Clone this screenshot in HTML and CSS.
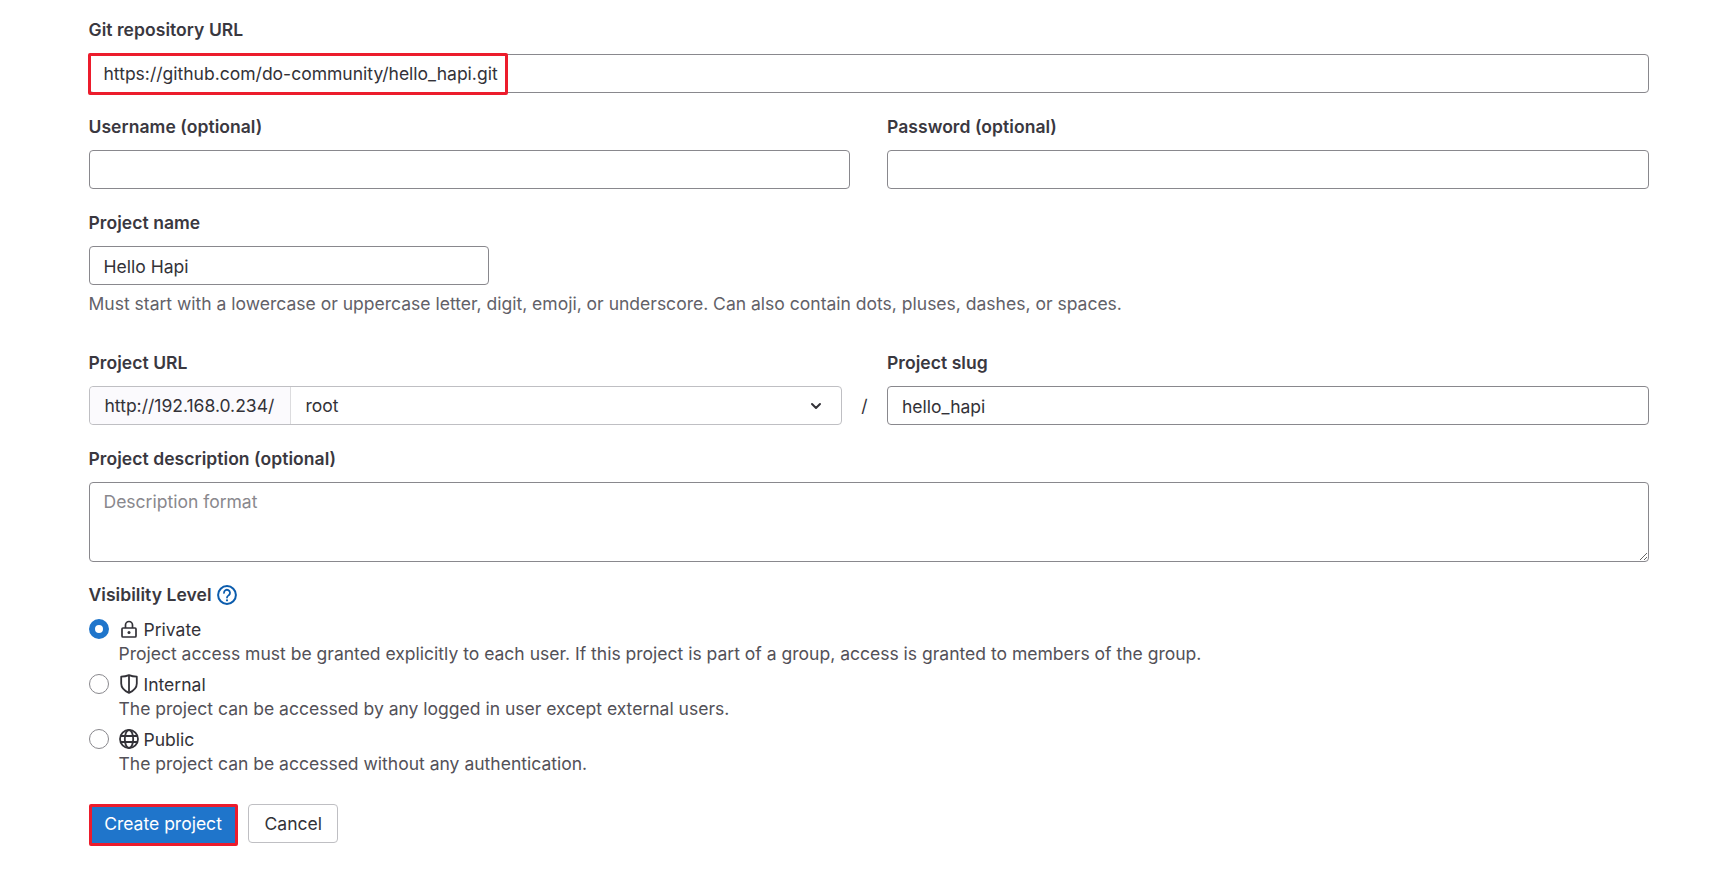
FILE: index.html
```html
<!DOCTYPE html>
<html lang="en">
<head>
<meta charset="utf-8">
<title>Import project</title>
<link rel="stylesheet" href="styles.css">
</head>
<body>
<form class="form">
  <div class="group group-first">
    <label class="label">Git repository URL</label>
    <div class="highlight-wrap">
      <input class="input" type="text" value="https://github.com/do-community/hello_hapi.git">
      <span class="highlight highlight-url"></span>
    </div>
  </div>
  <div class="row">
    <div class="group">
      <label class="label">Username (optional)</label>
      <input class="input" type="text">
    </div>
    <div class="group">
      <label class="label">Password (optional)</label>
      <input class="input" type="password">
    </div>
  </div>
  <div class="group group-name">
    <label class="label">Project name</label>
    <input class="input input-name" type="text" value="Hello Hapi">
    <p class="help">Must start with a lowercase or uppercase letter, digit, emoji, or underscore. Can also contain dots, pluses, dashes, or spaces.</p>
  </div>
  <div class="row row-url">
    <div class="group">
      <label class="label">Project URL</label>
      <div class="url-line">
        <div class="input-group">
          <span class="prefix">http://192.168.0.234/</span>
          <div class="select">
            <span>root</span>
            <svg class="chevron" viewBox="0 0 16 16" width="16" height="16"><path d="M4 6l4 4 4-4" fill="none" stroke="#333238" stroke-width="2" stroke-linecap="round" stroke-linejoin="round"/></svg>
          </div>
        </div>
        <span class="slash">/</span>
      </div>
    </div>
    <div class="group">
      <label class="label">Project slug</label>
      <input class="input input-slug" type="text" value="hello_hapi">
    </div>
  </div>
  <div class="group group-desc">
    <label class="label">Project description (optional)</label>
    <textarea class="textarea" placeholder="Description format"></textarea>
  </div>
  <div class="visibility">
    <div class="vis-title">
      <span class="label-text">Visibility Level</span>
      <svg class="help-icon" viewBox="0 0 20 20" width="20" height="20"><circle cx="10" cy="10" r="8.900" fill="none" stroke="#0b5cad" stroke-width="2"/><path d="M7 7.900a3 3 0 1 1 4.800 2.300c-1.100.8-1.800 1.200-1.800 2.400" fill="none" stroke="#0b5cad" stroke-width="1.800" stroke-linecap="round"/><circle cx="10" cy="15.300" r="1.100" fill="#0b5cad"/></svg>
    </div>
    <div class="option">
      <span class="radio radio-on"></span>
      <div class="option-body">
        <div class="option-title">
          <svg class="vis-icon" viewBox="0 0 20 20" width="20" height="20"><path d="M6.500 9V6a3.500 3.500 0 0 1 7 0v3" fill="none" stroke="#333238" stroke-width="1.700"/><rect x="3" y="9" width="14" height="9" rx="1" fill="none" stroke="#333238" stroke-width="1.700"/><circle cx="10" cy="13.500" r="1.500" fill="#333238"/></svg>
          <span>Private</span>
        </div>
        <div class="option-desc">Project access must be granted explicitly to each user. If this project is part of a group, access is granted to members of the group.</div>
      </div>
    </div>
    <div class="option">
      <span class="radio"></span>
      <div class="option-body">
        <div class="option-title">
          <svg class="vis-icon" viewBox="0 0 20 20" width="20" height="20"><path d="M10 1.200c2.600 1.100 5.200 1.500 7.800 1.500v6.800c0 4.300-3.300 7.400-7.800 9.300-4.500-1.900-7.800-5-7.800-9.300V2.700c2.600 0 5.200-.4 7.800-1.500z" fill="none" stroke="#333238" stroke-width="1.800" stroke-linejoin="round"/><path d="M10 1.500v17" stroke="#333238" stroke-width="1.800"/></svg>
          <span>Internal</span>
        </div>
        <div class="option-desc">The project can be accessed by any logged in user except external users.</div>
      </div>
    </div>
    <div class="option">
      <span class="radio"></span>
      <div class="option-body">
        <div class="option-title">
          <svg class="vis-icon" viewBox="0 0 20 20" width="20" height="20"><circle cx="10" cy="10" r="9" fill="none" stroke="#333238" stroke-width="1.800"/><ellipse cx="10" cy="10" rx="4.200" ry="9" fill="none" stroke="#333238" stroke-width="1.800"/><path d="M1.500 7h17M1.500 13h17" stroke="#333238" stroke-width="1.800"/></svg>
          <span>Public</span>
        </div>
        <div class="option-desc">The project can be accessed without any authentication.</div>
      </div>
    </div>
  </div>
  <div class="actions">
    <button class="btn btn-primary" type="button">Create project</button>
    <button class="btn btn-cancel" type="button">Cancel</button>
  </div>
</form>
</body>
</html>
```
FILE: styles.css
```css
* { box-sizing: border-box; }
html, body { margin: 0; padding: 0; background: #fff; }
body {
  width: 1720px;
  height: 880px;
  overflow: hidden;
  font-family: Inter, "Noto Sans", sans-serif;
  font-size: 17.53px;
  color: #333238;
}
.form { padding: 18px 71px 0 88.5px; }
.group { margin-bottom: 22px; min-width: 0; }
.label, .label-text {
  display: block;
  font-weight: 600;
  line-height: 24px;
  margin-bottom: 11px;
  color: #3a383f;
  letter-spacing: 0.05px;
}
.group-first .label { margin-bottom: 12px; }
.label-text { margin-bottom: 0; }
.input, .textarea {
  display: block;
  width: 100%;
  height: 39px;
  padding: 0 14px;
  border: 1px solid #89888d;
  border-radius: 4px;
  background: #fff;
  font: inherit;
  color: #333238;
  outline: none;
}
.input-name { width: 400px; padding-top: 1px; }
.input-slug { padding-top: 1px; }
.highlight-wrap { position: relative; }
.highlight {
  position: absolute;
  border: 3px solid #ec1c2c;
  pointer-events: none;
}
.highlight-url { left: -1px; top: -1px; width: 420px; height: 42px; border-radius: 2px; }
.row {
  display: grid;
  grid-template-columns: 761.5px 761.5px;
  column-gap: 37px;
}
.row-url { grid-template-columns: 798.5px 761.5px; column-gap: 0; }
.group-name { margin-bottom: 35px; }
.help {
  margin: 7px 0 0;
  line-height: 24px;
  color: #626168;
}
.url-line { display: flex; align-items: center; height: 39px; }
.input-group {
  display: flex;
  width: 753.5px;
  height: 39px;
  border: 1px solid #bfbfc3;
  border-radius: 4px;
}
.prefix {
  display: flex;
  align-items: center;
  width: 201px;
  padding-left: 15px;
  background: #fbfafd;
  border-right: 1px solid #dcdcde;
  border-radius: 4px 0 0 4px;
  white-space: nowrap;
}
.select {
  flex: 1;
  display: flex;
  align-items: center;
  justify-content: space-between;
  padding: 0 17px 0 15px;
}
.chevron { display: block; }
.slash { flex: 1; text-align: center; }
.textarea {
  height: 80px;
  padding-top: 7px;
  resize: vertical;
  line-height: 24px;
}
.textarea::placeholder { color: #89888d; opacity: 1; }
.group-desc { margin-bottom: 21px; }
.vis-title { display: flex; align-items: center; gap: 5px; height: 24px; margin-bottom: 10px; }
.help-icon { display: block; }
.option { display: flex; height: 55px; }
.radio {
  width: 20px;
  height: 20px;
  margin-top: 2px;
  margin-right: 10px;
  border: 1px solid #89888d;
  border-radius: 50%;
  flex: none;
  background: #fff;
}
.radio-on { border: 6px solid #1f75cb; }
.option-title { display: flex; align-items: center; height: 24px; }
.vis-icon { display: block; width: 20px; height: 20px; flex: none; margin-right: 5px; }
.option-desc { line-height: 25px; color: #535158; white-space: nowrap; }
.actions { display: flex; align-items: flex-start; gap: 10.5px; margin-top: 22px; }
.btn {
  height: 39px;
  padding: 0 15px;
  border: 1px solid #bfbfc3;
  border-radius: 4px;
  background: #fff;
  font: inherit;
  color: #333238;
}
.btn-cancel { padding: 0 15.5px; }
.btn-primary {
  background: #1f75cb;
  color: #fff;
  border: 3px solid #ec1c2c;
  border-radius: 2px;
  width: 149px;
  height: 42px;
  padding: 0 0 3px;
}
```
